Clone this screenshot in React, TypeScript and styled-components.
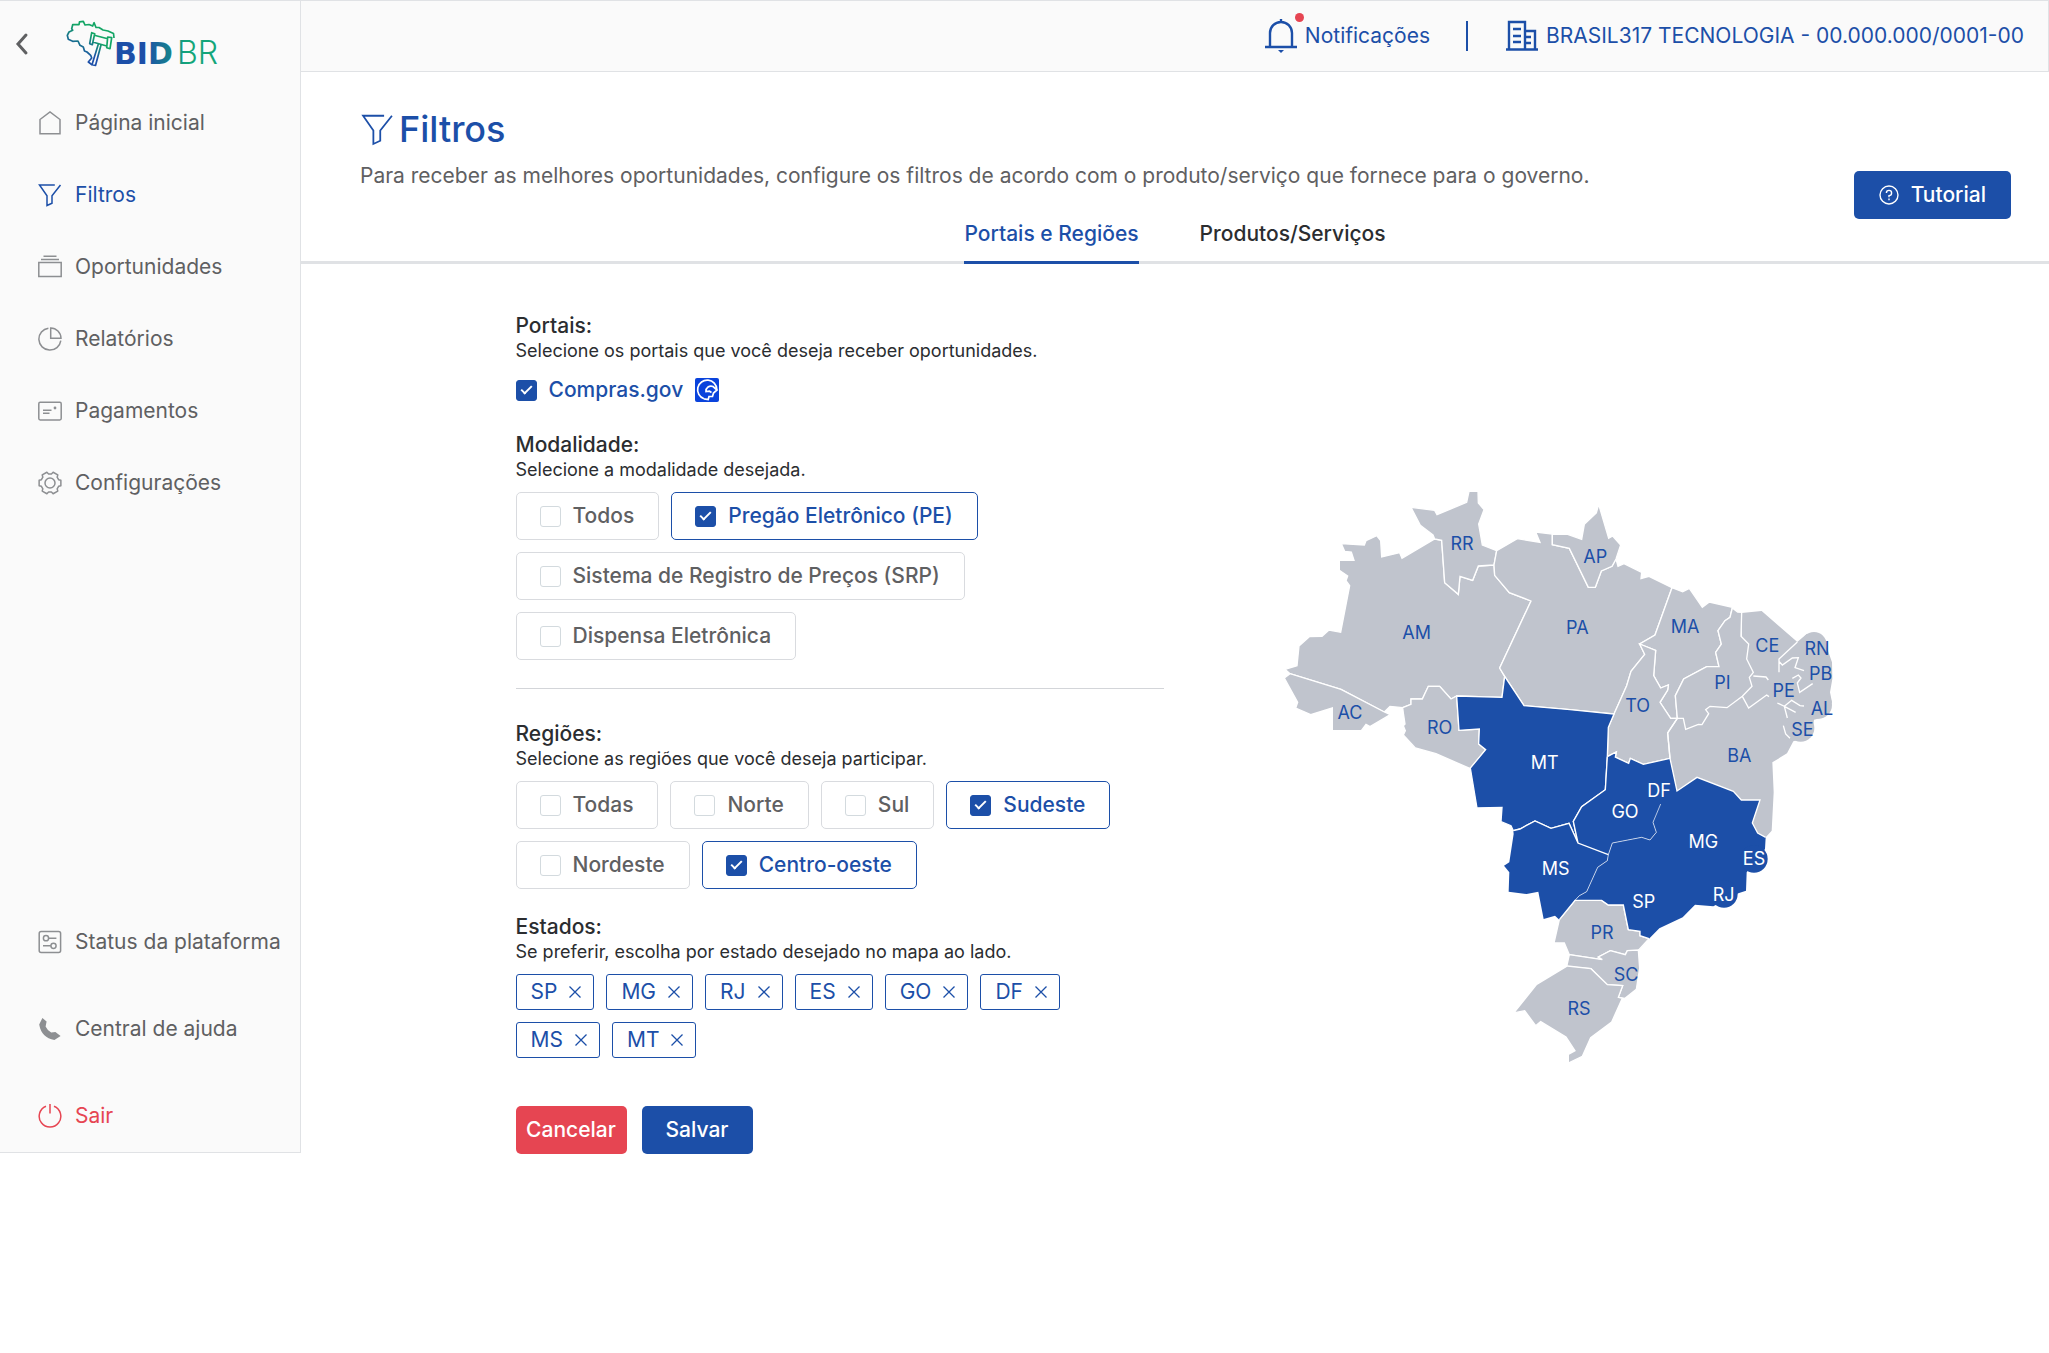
import React, { useState } from "react";
import styled, { createGlobalStyle, css } from "styled-components";

const color = {
  blue: "#1c4fa8",
  red: "#e64552",
  text: "#5f6062",
  dark: "#2b2d30",
  icon: "#8d8f92",
  line: "#e0e2e5",
  panel: "#fafafa",
  land: "#c0c4cd",
};

const Global = createGlobalStyle`
  *, *::before, *::after { box-sizing: border-box; }
  body { margin: 0; background: #fff; color: ${color.dark}; font: 400 21px/24px Inter, "Liberation Sans", sans-serif; }
  button, input { font: inherit; margin: 0; }
  h1, h2, p, ul { margin: 0; padding: 0; }
  ul { list-style: none; }
`;

/* ---------- shell ---------- */
const Page = styled.div`
  display: flex;
  align-items: flex-start;
  min-height: 100vh;
`;
const Sidebar = styled.aside`
  flex: 0 0 301px;
  display: flex;
  flex-direction: column;
  background: ${color.panel};
  border: 1px solid ${color.line};
  border-left: 0;
`;
const Brand = styled.div`
  display: flex;
  align-items: center;
  height: 86px;
  padding-left: 14px;
  gap: 34px;
`;
const BackButton = styled.button`
  display: flex;
  padding: 0;
  border: 0;
  background: none;
  color: ${color.text};
  cursor: pointer;
`;
const NavList = styled.ul<{ $gap: number }>`
  display: flex;
  flex-direction: column;
  gap: ${(p) => p.$gap}px;
  li { height: 72px; display: flex; }
`;
const SideNav = styled.nav`
  display: flex;
  flex-direction: column;
  gap: 387px;
`;
const NavLink = styled.a<{ $tone?: "active" | "danger" }>`
  flex: 1;
  display: flex;
  align-items: center;
  gap: 13px;
  padding-left: 38px;
  text-decoration: none;
  white-space: nowrap;
  color: ${(p) => (p.$tone === "active" ? color.blue : p.$tone === "danger" ? color.red : color.text)};
  svg { color: ${(p) => (p.$tone ? "inherit" : color.icon)}; }
`;
const Main = styled.main`
  flex: 1;
  min-width: 0;
`;
const TopBar = styled.header`
  display: flex;
  align-items: center;
  justify-content: flex-end;
  height: 72px;
  padding: 0 24px 0 0;
  background: ${color.panel};
  border: 1px solid ${color.line};
  border-left: 0;
  color: ${color.blue};
`;
const TopLink = styled.a`
  position: relative;
  display: flex;
  align-items: center;
  gap: 8px;
  color: inherit;
  text-decoration: none;
`;
const Dot = styled.span`
  position: absolute;
  top: -6px;
  left: 30px;
  width: 9px;
  height: 9px;
  border-radius: 50%;
  background: ${color.red};
`;
const TopDivider = styled.span`
  width: 2px;
  height: 30px;
  margin: 0 38px 0 36px;
  background: ${color.blue};
`;

/* ---------- page heading ---------- */
const Heading = styled.section`
  display: flex;
  align-items: flex-end;
  justify-content: space-between;
  padding: 35px 38px 0 59px;
`;
const Title = styled.h1`
  display: flex;
  align-items: center;
  gap: 5px;
  padding-left: 1px;
  color: ${color.blue};
  font-size: 36px;
  line-height: 44px;
  font-weight: 500;
`;
const Lead = styled.p`
  margin-top: 13px;
  color: ${color.text};
`;
const solid = css`
  display: flex;
  align-items: center;
  justify-content: center;
  height: 48px;
  border: 0;
  border-radius: 5px;
  color: #fff;
  font-weight: 500;
  cursor: pointer;
`;
const TutorialButton = styled.button`
  ${solid}
  gap: 12px;
  padding: 0 25px;
  margin-bottom: -31px;
  background: ${color.blue};
`;
const Tabs = styled.div`
  display: flex;
  justify-content: center;
  gap: 61px;
  margin-top: 27px;
  border-bottom: 3px solid ${color.line};
`;
const Tab = styled.button<{ $active: boolean }>`
  height: 49px;
  margin-bottom: -3px;
  padding: 0 0 8px;
  border: 0;
  border-bottom: 3px solid ${(p) => (p.$active ? color.blue : "transparent")};
  background: none;
  color: ${(p) => (p.$active ? color.blue : color.dark)};
  font-weight: 500;
  cursor: pointer;
`;

/* ---------- form ---------- */
const Content = styled.div`
  display: flex;
  justify-content: center;
  align-items: flex-start;
  gap: 106px;
  padding-top: 48px;
`;
const Form = styled.form`
  flex: 0 1 648px;
`;
const Group = styled.section`
  margin-bottom: 24px;
`;
const GroupTitle = styled.h2`
  font-size: 21px;
  line-height: 27px;
  font-weight: 500;
`;
const Hint = styled.p`
  font-size: 18px;
  line-height: 24px;
  margin-bottom: 10px;
`;
const Options = styled.div`
  display: flex;
  flex-wrap: wrap;
  gap: 12px;
  padding-right: 24px;
`;
const Plain = styled.label`
  display: flex;
  align-items: center;
  gap: 12px;
  height: 34px;
  color: ${color.blue};
  font-weight: 500;
  cursor: pointer;
`;
const Chip = styled.label<{ $on: boolean }>`
  display: flex;
  align-items: center;
  gap: 12px;
  height: 48px;
  padding: 0 24px 0 23px;
  border: 1px solid ${(p) => (p.$on ? color.blue : "#d9dbdf")};
  border-radius: 5px;
  color: ${(p) => (p.$on ? color.blue : color.text)};
  font-weight: 500;
  cursor: pointer;
`;
const Check = styled.input`
  appearance: none;
  flex: none;
  display: grid;
  place-items: center;
  width: 21px;
  height: 21px;
  border: 1px solid #d3dade;
  border-radius: 3px;
  background: #fff;
  &:checked { background: ${color.blue}; border-color: ${color.blue}; }
  &:checked::after {
    content: "";
    width: 11px;
    height: 6px;
    border: solid #fff;
    border-width: 0 0 2px 2px;
    transform: rotate(-45deg) translate(1px, -1px);
  }
`;
const Rule = styled.hr`
  height: 1px;
  margin: 28px 0 31px;
  border: 0;
  background: #d3d5d9;
`;
const Tag = styled.span`
  display: flex;
  align-items: center;
  gap: 12px;
  height: 36px;
  padding: 0 12px 0 14px;
  border: 1px solid ${color.blue};
  border-radius: 3px;
  color: ${color.blue};
`;
const TagRemove = styled.button`
  display: flex;
  padding: 0;
  border: 0;
  background: none;
  color: inherit;
  cursor: pointer;
`;
const Actions = styled.div`
  display: flex;
  gap: 15px;
  margin-top: 48px;
`;
const Action = styled.button<{ $bg: string }>`
  ${solid}
  width: 111px;
  padding: 0;
  background: ${(p) => p.$bg};
`;

/* ---------- map ---------- */
const MapSvg = styled.svg`
  flex: 0 1 565px;
  min-width: 0;
  margin-top: 167px;
  text { font-size: 54px; text-anchor: middle; }
`;
const Shape = styled.polygon<{ $on?: boolean; $edge?: number }>`
  fill: ${(p) => (p.$on ? color.blue : color.land)};
  stroke: #fff;
  stroke-width: ${(p) => p.$edge ?? 4};
`;
const Coast = styled.g`
  fill: ${color.land};
`;
const Border = styled.path`
  fill: none;
  stroke: #fff;
`;
const Uf = styled.text<{ $on?: boolean }>`
  fill: ${(p) => (p.$on ? "#fff" : color.blue)};
`;

const land: { id: string; on?: boolean; points: string }[] = [
  { id: "AM", points: "45,571 81,560 87,501 118,473 156,472 177,453 212,460 239,320 228,305 233,291 208,274 208,244 252,244 244,219 224,217 214,194 283,198 288,185 320,170 332,185 335,234 389,221 396,238 494,180 515,184 524,311 565,346 570,292 608,304 625,261 672,258 674,289 718,341 783,366 689,567 704,592 696,655 560,651 543,660 509,622 475,622 457,660 423,660 423,676 398,686 360,682 343,699 213,631 60,584" },
  { id: "AC", points: "43,597 60,584 213,631 343,699 361,707 300,743 288,736 274,755 187,755 187,687 122,707 77,687 83,670" },
  { id: "RO", points: "398,686 423,676 423,660 457,660 475,622 509,622 543,660 560,651 567,754 628,750 626,795 647,812 601,869 498,824 436,807 400,768 406,755 400,740 405,735 400,702" },
  { id: "RR", points: "423,85 494,94 501,107 590,70 597,37 624,37 625,72 642,92 626,135 637,198 680,215 672,258 625,261 608,304 570,292 565,346 524,311 515,184 494,180 489,168 451,139" },
  { id: "PA", points: "680,215 742,179 810,190 797,159 847,165 847,197 898,208 955,325 976,325 994,276 1026,262 1038,240 1044,262 1062,254 1115,280 1113,299 1137,292 1206,326 1155,468 1109,495 1124,526 1083,577 1070,620 1032,705 900,692 762,680 704,592 689,567 783,366 718,341 674,289 672,258" },
  { id: "AP", points: "847,165 893,166 935,181 943,136 979,102 986,76 1016,178 1028,171 1052,198 1038,240 1026,262 994,276 976,325 955,325 898,208 847,197" },
  { id: "MA", points: "1206,326 1238,338 1258,328 1297,385 1318,369 1387,385 1380,415 1365,425 1344,455 1354,495 1337,520 1347,563 1310,563 1241,600 1216,650 1222,718 1202,718 1170,670 1193,633 1195,618 1172,627 1151,590 1157,514 1109,495 1155,468" },
  { id: "PI", points: "1387,387 1403,399 1415,400 1413,472 1436,495 1430,540 1450,580 1438,595 1446,622 1417,652 1371,686 1320,682 1307,692 1316,704 1296,737 1285,736 1247,751 1240,718 1222,718 1216,650 1241,600 1310,563 1347,563 1337,520 1354,495 1344,455 1365,425 1380,415" },
  { id: "TO", points: "1109,495 1157,514 1151,590 1172,627 1195,618 1193,633 1170,670 1202,718 1222,718 1193,762 1200,838 1120,856 1081,838 1076,853 1036,834 1039,819 1012,833 1015,745 1032,705 1070,620 1083,577 1124,526" },
  { id: "MT", on: true, points: "704,592 762,680 900,692 1032,705 1015,745 1012,833 1006,932 935,983 910,1027 924,1092 897,1033 843,1048 795,1026 750,1050 730,1055 723,1040 693,1028 696,985 621,987 601,867 647,812 626,795 628,750 567,754 560,651 696,655" },
  { id: "PR", points: "915,1264 995,1264 1015,1278 1060,1278 1075,1352 1110,1357 1110,1370 1137,1379 1104,1415 1072,1415 1066,1427 1021,1415 985,1434 997,1442 898,1427 883,1392 852,1392 868,1322" },
  { id: "SC", points: "898,1427 997,1442 985,1434 1021,1415 1066,1427 1072,1415 1105,1413 1109,1468 1099,1531 1065,1558 1045,1555 1058,1520 1012,1517 963,1469 890,1463" },
  { id: "RS", points: "892,1461 963,1469 1012,1517 1058,1520 1045,1555 1057,1558 1025,1629 962,1676 937,1732 895,1752 895,1726 915,1715 888,1674 812,1628 797,1640 764,1595 731,1602 800,1516" },
];
const selected: { id: string; points: string }[] = [
  { id: "GO", points: "1012,833 1039,819 1036,834 1076,853 1081,838 1120,856 1200,838 1221,936 1172,975 1149,1030 1159,1060 1140,1083 1115,1075 1027,1092 1015,1127 924,1092 910,1027 935,983 1006,932" },
  { id: "MG", points: "1200,940 1221,936 1281,895 1390,937 1414,963 1470,963 1447,1032 1463,1062 1487,1075 1485,1110 1430,1180 1428,1235 1405,1243 1330,1282 1275,1277 1238,1315 1168,1348 1137,1379 1110,1370 1110,1357 1075,1352 1060,1278 1015,1278 995,1264 915,1264 928,1250 950,1238 983,1165 1012,1145 1015,1127 1027,1092 1115,1075 1140,1083 1159,1060 1149,1030 1165,975" },
  { id: "MS", points: "730,1055 750,1050 795,1026 843,1048 897,1033 924,1092 1015,1127 1012,1145 983,1165 950,1238 928,1250 915,1264 868,1322 855,1310 821,1320 805,1238 770,1245 716,1238 718,1180 702,1160 718,1150 731,1065" },
];
const labels: [string, number, number, boolean?][] = [
  ["AM", 440, 480], ["RR", 576, 212], ["AC", 240, 720], ["RO", 509, 766], ["PA", 922, 465], ["AP", 976, 253],
  ["MA", 1245, 462], ["PI", 1357, 630], ["CE", 1492, 518], ["RN", 1641, 529], ["PB", 1652, 604], ["PE", 1541, 654],
  ["AL", 1656, 709], ["SE", 1597, 771], ["TO", 1103, 700], ["BA", 1408, 850], ["MT", 824, 869, true],
  ["GO", 1065, 1016, true], ["DF", 1167, 954, true], ["MG", 1300, 1107, true], ["ES", 1452, 1158, true],
  ["RJ", 1361, 1266, true], ["SP", 1121, 1286, true], ["MS", 857, 1187, true], ["PR", 996, 1381],
  ["SC", 1068, 1506], ["RS", 927, 1609],
];

function BrazilMap() {
  return (
    <MapSvg viewBox="0 0 1695 1770" role="img" aria-label="Mapa do Brasil">
      <Coast>
        <polygon points="1415,402 1475,396 1582,489 1610,465 1660,475 1672,510 1686,550 1687,600 1680,640 1686,670 1660,715 1632,722 1625,770 1570,787 1551,823 1507,850 1511,940 1505,1055 1487,1075 1463,1062 1447,1032 1470,963 1414,963 1390,937 1281,895 1221,936 1200,838 1193,762 1222,718 1240,718 1417,600" />
        <circle cx="1632" cy="497" r="38" />
        <circle cx="1645" cy="585" r="41" />
        <circle cx="1645" cy="678" r="41" />
        <circle cx="1592" cy="747" r="41" />
      </Coast>
      {land.map((s) => (
        <Shape key={s.id} $on={s.on} points={s.points} />
      ))}
      {selected.map((s) => (
        <Shape key={s.id} $on $edge={0} points={s.points} />
      ))}
      <circle cx="1452" cy="1140" r="41" fill={color.blue} />
      <circle cx="1362" cy="1245" r="41" fill={color.blue} />
      <Border
        strokeWidth="4"
        d="M1582 489L1527 540V580M1527 547L1537 558L1567 537L1585 536L1575 566L1602 575M1450 591L1488 594L1495 603M1567 598L1585 588L1593 597L1582 612L1589 640L1628 614M1417 652L1436 687L1490 648L1497 653M1522 672L1543 682L1565 664L1590 680L1602 681M1543 682L1552 717M1543 682L1577 700M1540 740L1547 765L1560 778M1222 718L1193 762L1200 838L1221 936L1281 895L1390 937L1414 963H1470L1447 1032L1463 1062L1487 1075M1012 833L1039 819L1036 834L1076 853L1081 838L1120 856L1200 838M1012 833L1006 932L935 983L910 1027L924 1092L1015 1127M924 1092L897 1033L843 1048L795 1026L750 1050L730 1055M868 1322L915 1264H995L1015 1278H1060L1075 1352L1110 1357V1370L1137 1379"
      />
      <Border
        strokeWidth="2"
        d="M1172 975L1149 1030L1159 1060L1140 1083L1115 1075L1027 1092L1015 1127L1012 1145L983 1165L950 1238L928 1250L915 1264"
      />
      {labels.map(([uf, x, y, on]) => (
        <Uf key={uf} x={x} y={y} $on={on}>
          {uf}
        </Uf>
      ))}
    </MapSvg>
  );
}

/* ---------- icons ---------- */
type IconProps = { size?: number; weight?: number; children: React.ReactNode };
function Icon({ size = 24, weight = 1.5, children }: IconProps) {
  return (
    <svg width={size} height={size} viewBox="0 0 24 24" fill="none" stroke="currentColor" strokeWidth={weight} aria-hidden="true">
      {children}
    </svg>
  );
}
const gear = (() => {
  const pts: string[] = [];
  for (let i = 0; i < 6; i++) {
    [[-21, 9.2], [-14, 11.2], [14, 11.2], [21, 9.2]].forEach(([off, r]) => {
      const a = ((i * 60 + off) * Math.PI) / 180;
      pts.push(`${(12 + r * Math.cos(a)).toFixed(2)},${(12 + r * Math.sin(a)).toFixed(2)}`);
    });
  }
  return pts.join(" ");
})();
const icons = {
  home: <path d="M2 8.5L12 1L22 8.5V22.8H2Z" />,
  filter: <path d="M16.8 2H1.5L9 12.7V22.5L14 20.2V12.7L22.5 2" />,
  stack: <path d="M5.5 1.3H18.5M3 4.5H21M.8 7.6H23.2V21.6H.8Z" />,
  pie: <path d="M10.4 1.2A11 11 0 1 0 22.8 13.6M12.7 1V11.3H23A10.5 10.5 0 0 0 12.7 1Z" />,
  card: (
    <>
      <rect x=".8" y="3.3" width="22.4" height="17.6" rx="1.4" />
      <path d="M5 11.2H13.5M5 14.2H11.5" />
      <circle cx="17" cy="9" r="1.4" fill="currentColor" stroke="none" />
    </>
  ),
  gear: (
    <>
      <polygon points={gear} strokeLinejoin="round" />
      <circle cx="12" cy="12" r="5" />
    </>
  ),
  status: (
    <>
      <rect x="1.2" y="1.6" width="21.4" height="20.8" rx="2" />
      <circle cx="8" cy="8.2" r="2.6" />
      <circle cx="15.5" cy="15.8" r="2.6" />
      <path d="M10.6 8.2H18.4M5 15.8H12.9" />
    </>
  ),
  phone: <path fill="currentColor" stroke="none" d="M1.2 7.5L4.4 1L8.6 4.6L7.6 9.4Q9.5 13.5 13.2 15.4L17.4 15L22.6 18.9L16.4 22.9Q3.6 21 1.2 7.5Z" />,
  power: <path d="M12 0V9.5M8 2.2A10.8 10.8 0 1 0 16 2.2" />,
};

function Logo() {
  return (
    <svg width="170" height="60" viewBox="64 14 170 60" role="img" aria-label="BIDBR">
      <defs>
        <linearGradient id="coast" x1="0" y1="1" x2="0.6" y2="0">
          <stop offset="0.3" stopColor="#1c4fa8" />
          <stop offset="0.75" stopColor="#13a565" />
        </linearGradient>
        <linearGradient id="word" gradientUnits="userSpaceOnUse" x1="116" y1="0" x2="200" y2="0">
          <stop offset="0.35" stopColor="#1c4fa8" />
          <stop offset="0.85" stopColor="#13a57a" />
        </linearGradient>
      </defs>
      <g fill="none" stroke="url(#coast)" strokeWidth="1.7" strokeLinejoin="round">
        <path d="M114 38L113.5 33.5L108 31L103 30L99 27.5L96 27.5L94 22.7L92.7 26L89 24.5L85 25L83.3 21.3L79.5 21.8L79 24.7L72.7 24.7L71.7 28.7L72.7 30.3L69 32L67.3 35.3L68.3 39.3L72.7 41.3L78 41L80 45.3L83.3 47L84.5 51L87 52L90.7 55.3L91.7 58L88.3 62L92 64.7" />
        <path d="M91.7 32.7L94.7 33.7L92.3 44.7L89.7 43.7ZM107.7 37L111.7 37.7L110 48.7L106.7 47.7ZM94.3 35.3L107.7 38.7M92.7 42L106.7 46M98.3 44.3L92 64.7L95.5 65.5L101 45" />
      </g>
      <text y="64" fontSize="30" fontFamily='"DejaVu Sans", sans-serif' fill="url(#word)">
        <tspan x="114" fontWeight="700">BID</tspan>
        <tspan x="177" fontFamily="Inter, sans-serif" fontSize="32" fontWeight="300">BR</tspan>
      </text>
    </svg>
  );
}

const mainNav: { label: string; icon: React.ReactNode; tone?: "active" }[] = [
  { label: "Página inicial", icon: icons.home },
  { label: "Filtros", icon: icons.filter, tone: "active" },
  { label: "Oportunidades", icon: icons.stack },
  { label: "Relatórios", icon: icons.pie },
  { label: "Pagamentos", icon: icons.card },
  { label: "Configurações", icon: icons.gear },
];
const footNav: { label: string; icon: React.ReactNode; tone?: "danger" }[] = [
  { label: "Status da plataforma", icon: icons.status },
  { label: "Central de ajuda", icon: icons.phone },
  { label: "Sair", icon: icons.power, tone: "danger" },
];

function OptionList({ names, initial }: { names: string[]; initial: string[] }) {
  const [on, setOn] = useState(initial);
  const toggle = (n: string) => setOn(on.includes(n) ? on.filter((v) => v !== n) : [...on, n]);
  return (
    <Options>
      {names.map((n) => (
        <Chip key={n} $on={on.includes(n)}>
          <Check type="checkbox" checked={on.includes(n)} onChange={() => toggle(n)} />
          {n}
        </Chip>
      ))}
    </Options>
  );
}

export default function App() {
  const [tab, setTab] = useState(0);
  const [states, setStates] = useState(["SP", "MG", "RJ", "ES", "GO", "DF", "MS", "MT"]);
  return (
    <>
      <Global />
      <Page>
        <Sidebar>
          <Brand>
            <BackButton aria-label="Recolher menu">
              <svg width="16" height="24" viewBox="0 0 16 24" fill="none" stroke="currentColor" strokeWidth="3">
                <path d="M12 3L4 12L12 21" strokeLinecap="round" />
              </svg>
            </BackButton>
            <Logo />
          </Brand>
          <SideNav>
            <NavList $gap={0}>
              {mainNav.map((n) => (
                <li key={n.label}>
                  <NavLink href="#" $tone={n.tone}>
                    <Icon>{n.icon}</Icon>
                    {n.label}
                  </NavLink>
                </li>
              ))}
            </NavList>
            <NavList $gap={15}>
              {footNav.map((n) => (
                <li key={n.label}>
                  <NavLink href="#" $tone={n.tone}>
                    <Icon>{n.icon}</Icon>
                    {n.label}
                  </NavLink>
                </li>
              ))}
            </NavList>
          </SideNav>
        </Sidebar>
        <Main>
          <TopBar>
            <TopLink href="#">
              <svg width="32" height="34" viewBox="0 0 32 34" fill="none" stroke="currentColor" strokeWidth="2.4" aria-hidden="true">
                <path d="M0 28H32M5 28V14A11 11 0 0 1 27 14V28M16 4V0" />
                <path d="M13 31H19L16 34Z" fill="currentColor" stroke="none" />
              </svg>
              Notificações
              <Dot />
            </TopLink>
            <TopDivider />
            <TopLink href="#">
              <svg width="32" height="32" viewBox="0 0 32 32" fill="none" stroke="currentColor" strokeWidth="2.4" aria-hidden="true">
                <path d="M0 29.5H32M3 29V2H19V29M19 11H29V29M7 9H15M7 16H15M7 22H15M19 17H25M19 23H25" />
              </svg>
              BRASIL317 TECNOLOGIA - 00.000.000/0001-00
            </TopLink>
          </TopBar>
          <Heading>
            <div>
              <Title>
                <Icon size={33} weight={1.3}>{icons.filter}</Icon>
                Filtros
              </Title>
              <Lead>
                Para receber as melhores oportunidades, configure os filtros de acordo com o produto/serviço que fornece para o governo.
              </Lead>
            </div>
            <TutorialButton>
              <svg width="20" height="20" viewBox="0 0 20 20" fill="none" stroke="currentColor" strokeWidth="1.4" aria-hidden="true">
                <circle cx="10" cy="10" r="9" />
                <path d="M7.4 8A2.6 2.6 0 1 1 10 10.6V12.2M10 13.6V15.2" />
              </svg>
              Tutorial
            </TutorialButton>
          </Heading>
          <Tabs role="tablist">
            {["Portais e Regiões", "Produtos/Serviços"].map((t, i) => (
              <Tab key={t} role="tab" aria-selected={tab === i} $active={tab === i} onClick={() => setTab(i)}>
                {t}
              </Tab>
            ))}
          </Tabs>
          <Content>
            <Form onSubmit={(e) => e.preventDefault()}>
              <Group>
                <GroupTitle>Portais:</GroupTitle>
                <Hint>Selecione os portais que você deseja receber oportunidades.</Hint>
                <Plain>
                  <Check type="checkbox" defaultChecked />
                  Compras.gov
                  <svg width="24" height="24" viewBox="0 0 24 24" aria-hidden="true">
                    <rect width="24" height="24" rx="2" fill="#0a43dc" />
                    <path d="M9 20.8A9.6 9.6 0 1 1 21.8 11.5M9 20.8L13.2 21.5L14 18.5L17.5 18.5L18.5 15L22 12L18 8.5A5 5 0 0 0 11 13.5L14.5 13.2L16.5 14.5" fill="none" stroke="#fff" strokeWidth="1.7" />
                  </svg>
                </Plain>
              </Group>
              <Group>
                <GroupTitle>Modalidade:</GroupTitle>
                <Hint>Selecione a modalidade desejada.</Hint>
                <OptionList
                  names={["Todos", "Pregão Eletrônico (PE)", "Sistema de Registro de Preços (SRP)", "Dispensa Eletrônica"]}
                  initial={["Pregão Eletrônico (PE)"]}
                />
              </Group>
              <Rule />
              <Group>
                <GroupTitle>Regiões:</GroupTitle>
                <Hint>Selecione as regiões que você deseja participar.</Hint>
                <OptionList
                  names={["Todas", "Norte", "Sul", "Sudeste", "Nordeste", "Centro-oeste"]}
                  initial={["Sudeste", "Centro-oeste"]}
                />
              </Group>
              <Group>
                <GroupTitle>Estados:</GroupTitle>
                <Hint>Se preferir, escolha por estado desejado no mapa ao lado.</Hint>
                <Options>
                  {states.map((s) => (
                    <Tag key={s}>
                      {s}
                      <TagRemove type="button" aria-label={`Remover ${s}`} onClick={() => setStates(states.filter((v) => v !== s))}>
                        <svg width="12" height="12" viewBox="0 0 12 12" stroke="currentColor" strokeWidth="1.3">
                          <path d="M.5 .5L11.5 11.5M11.5 .5L.5 11.5" />
                        </svg>
                      </TagRemove>
                    </Tag>
                  ))}
                </Options>
              </Group>
              <Actions>
                <Action type="button" $bg={color.red}>Cancelar</Action>
                <Action type="submit" $bg={color.blue}>Salvar</Action>
              </Actions>
            </Form>
            <BrazilMap />
          </Content>
        </Main>
      </Page>
    </>
  );
}
